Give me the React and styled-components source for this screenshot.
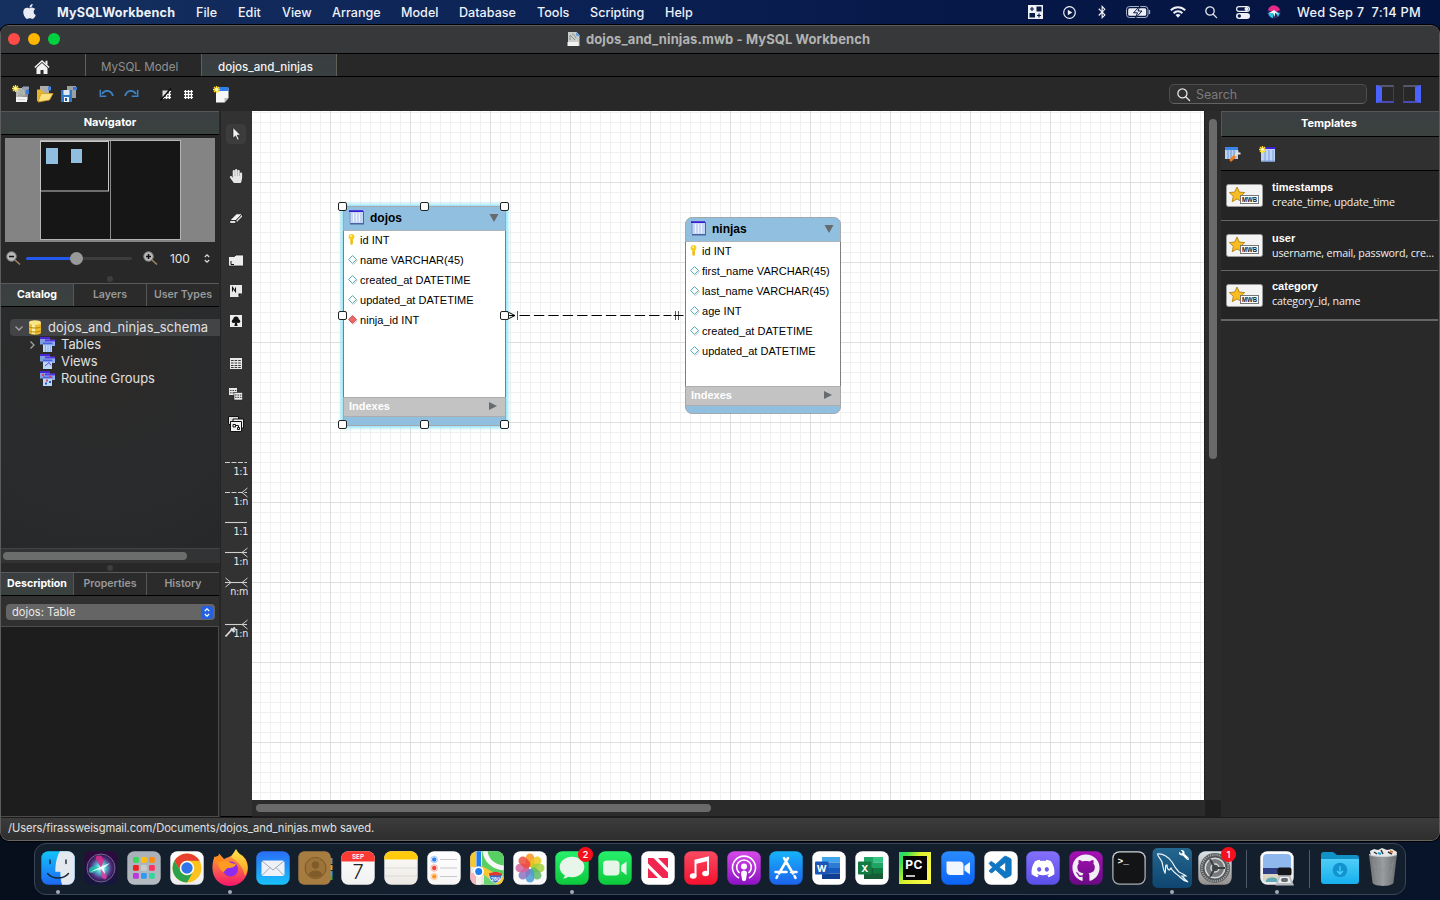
import React from "react";
import styled, { createGlobalStyle, css } from "styled-components";
import { FaApple, FaBluetoothB, FaDiscord, FaGithub, FaWrench, FaHandPaper } from "react-icons/fa";
import { VscVscode } from "react-icons/vsc";

const UI = `Inter, "Liberation Sans", sans-serif`;
const HELV = `"Liberation Sans", Arial, sans-serif`;

const Global = createGlobalStyle`
  * { box-sizing: border-box; }
  html, body { margin: 0; padding: 0; background: #040c1b; overflow: hidden; }
  svg { display: block; overflow: visible; flex: none; }
`;

const Desktop = styled.div`
  width: 1440px;
  height: 900px;
  overflow: hidden;
  display: flex;
  flex-direction: column;
  font-family: ${UI};
  color: #e4e4e4;
  background: linear-gradient(90deg, #15305f 0, #0d2457 33%, #061848 66%, #041440 100%) 0 0 / 100% 32px no-repeat,
    linear-gradient(90deg, #070e1c, #050d1f 50%, #08142a);
`;

/* ---------- menu bar ---------- */
const MenuBar = styled.header`
  height: 24px;
  flex: none;
  margin-bottom: 1px;
  display: flex;
  align-items: center;
  padding-left: 21px;
  font-size: 12.6px;
  font-weight: 500;
  color: #eef1f6;
`;
const MenuItem = styled.span`
  width: ${(p) => p.$w}px;
  margin-right: 21px;
  white-space: nowrap;
  font-weight: ${(p) => (p.$bold ? 700 : 500)};
  letter-spacing: ${(p) => p.$ls || 0}px;
`;
const AppleMark = styled.span`
  width: 36px;
  margin-top: -2px;
`;
const StatusItems = styled.div`
  margin-left: auto;
  display: flex;
  align-items: center;
`;
const StatusIcon = styled.span`
  width: ${(p) => p.$w}px;
  margin-right: ${(p) => p.$gap}px;
  padding-left: ${(p) => p.$pl || 0}px;
`;
const Clock = styled.span`
  width: 143px;
  white-space: pre;
  font-size: 12.8px;
  letter-spacing: 0.21px;
`;

/* ---------- window ---------- */
const Window = styled.main`
  height: 816px;
  flex: none;
  border: 1px solid #5c5c5d;
  border-bottom-color: #666;
  border-radius: 9px;
  box-shadow: 0 0 0 1px #000;
  overflow: hidden;
  display: flex;
  flex-direction: column;
  background: #292929;
`;
const TitleBar = styled.div`
  height: 28px;
  flex: none;
  display: flex;
  align-items: center;
  background: #373839;
  border-bottom: 1px solid #000;
  padding: 0 0 1px 7px;
`;
const Light = styled.i`
  width: 12px;
  height: 12px;
  border-radius: 50%;
  margin-right: 8px;
  background: ${(p) => p.$c};
`;
const WindowTitle = styled.div`
  display: flex;
  align-items: center;
  margin-left: 499px;
  gap: 6px;
  font-size: 13px;
  font-weight: 700;
  color: #b2b3b4;
  white-space: nowrap;
  letter-spacing: 0.1px;
  padding-bottom: 1px;
`;
const DocTabs = styled.div`
  height: 23px;
  flex: none;
  display: flex;
  background: #282828;
  border-bottom: 1px solid #000;
`;
const DocTab = styled.div`
  width: ${(p) => p.$w}px;
  border-right: 1px solid #625f58;
  display: flex;
  align-items: center;
  padding: 3px 0 0 ${(p) => p.$pl}px;
  font-size: 11.6px;
  letter-spacing: ${(p) => p.$ls || 0}px;
  white-space: nowrap;
  color: ${(p) => (p.$on ? "#f2f2f2" : "#8f9090")};
  font-weight: ${(p) => (p.$on ? 500 : 400)};
  background: ${(p) => (p.$on ? "linear-gradient(#3b3d40, #384140)" : "transparent")};
`;
const Toolbar = styled.div`
  height: 34px;
  flex: none;
  display: flex;
  align-items: center;
  padding-left: 11px;
  background: #282828;
`;
const ToolIcon = styled.span`
  width: 18px;
  margin-right: ${(p) => p.$gap}px;
`;
const Search = styled.div`
  margin-left: auto;
  width: 198px;
  height: 20px;
  border: 1px solid #4c4c4c;
  border-bottom-color: #626262;
  border-radius: 5px;
  background: #313131;
  display: flex;
  align-items: center;
  padding-left: 7px;
  gap: 6px;
  font-size: 12.4px;
  color: #7c7c7c;
`;
const PaneToggle = styled.i`
  width: 18px;
  height: 18px;
  margin-left: 9px;
  border: 1px solid #3a2fb8;
  border-top: 2px solid #55556e;
  border-bottom: 2px solid #4b4bb8;
  ${(p) => (p.$side === "left" ? css`border-left: 6px solid #4a63ff;` : css`border-right: 6px solid #4a63ff;`)}
  &:last-child { margin-right: 18px; }
`;
const Content = styled.div`
  height: 706px;
  flex: none;
  display: flex;
`;
const StatusBar = styled.footer`
  flex: 1;
  border-top: 1px solid #1b1b1b;
  background: linear-gradient(#3c3c3c, #2e2e2e);
  font-size: 11.2px;
  color: #e0e0e0;
  padding: 3px 0 0 7px;
  letter-spacing: -0.09px;
  line-height: 15px;
`;

/* ---------- left sidebar ---------- */
const Sidebar = styled.aside`
  width: 219px;
  flex: none;
  display: flex;
  flex-direction: column;
  background: #282828;
  padding-right: 1px;
`;
const PanelHeader = styled.div`
  height: ${(p) => p.$h}px;
  flex: none;
  border-top: 1px solid #575757;
  border-left: ${(p) => (p.$left ? "1px solid #575757" : 0)};
  border-bottom: 1px solid #000;
  background: linear-gradient(#3c3e41, #39423f);
  display: flex;
  align-items: center;
  justify-content: center;
  font-size: 11px;
  font-weight: 700;
  color: #fff;
  padding: 0 ${(p) => (p.$left ? 3 : 0)}px 2px 0;
`;
const Overview = styled.div`
  margin: 3px 4px 0;
  height: 104px;
  flex: none;
  background: #848484;
`;
const ZoomRow = styled.div`
  height: 32px;
  flex: none;
  display: flex;
  align-items: center;
  padding-left: 5px;
  font-size: 12px;
`;
const Slider = styled.div`
  width: 106px;
  height: 3px;
  margin: 0 11px 0 5px;
  border-radius: 2px;
  background: linear-gradient(90deg, #2459ee 50px, #3d3d3d 50px);
  display: flex;
  align-items: center;
  &::after {
    content: "";
    width: 13px;
    height: 13px;
    border-radius: 50%;
    background: #999;
    margin-left: 44px;
  }
`;
const ZoomValue = styled.span`
  width: 34px;
  margin-left: 12px;
  letter-spacing: -0.15px;
  padding-top: 1px;
`;
const Grip = styled.div`
  height: ${(p) => p.$h}px;
  flex: none;
  display: flex;
  align-items: center;
  justify-content: center;
  &::after {
    content: "";
    width: 6px;
    height: 6px;
    border-radius: 50%;
    background: #3e3e3e;
  }
`;
const Tabs = styled.div`
  height: 24px;
  flex: none;
  display: flex;
  border-top: 1px solid #5a5a5a;
  border-bottom: 1px solid #000;
  background: #2b2b2b;
`;
const Tab = styled.div`
  flex: 1 1 0;
  min-width: 0;
  display: flex;
  align-items: center;
  justify-content: center;
  font-size: 10.6px;
  font-weight: ${(p) => (p.$on ? 700 : 600)};
  white-space: nowrap;
  color: ${(p) => (p.$on ? "#fff" : "#98999a")};
  background: ${(p) => (p.$on ? "linear-gradient(#3c3e41, #39423f)" : "transparent")};
  border-left: ${(p) => (p.$on ? 0 : "1px solid #575757")};
  padding-bottom: 1px;
`;
const Tree = styled.div`
  flex: none;
  height: 241px;
  margin-right: -1px;
  padding-top: 12px;
  background: radial-gradient(circle at 100px 50px, #2c2a28, #292b2d 60%, #272829);
`;
const TreeRow = styled.div`
  height: 17px;
  display: flex;
  align-items: center;
  margin-left: 9px;
  padding-left: ${(p) => p.$pl}px;
  border-radius: 4px 0 0 4px;
  background: ${(p) => (p.$on ? "#434446" : "transparent")};
  font-size: 12.9px;
  letter-spacing: ${(p) => p.$ls || 0}px;
  white-space: nowrap;
  color: #e0e0e0;
`;
const TreeIcon = styled.span`
  width: ${(p) => p.$w}px;
  flex: none;
`;
const HScroll = styled.div`
  height: 15px;
  flex: none;
  margin-right: -1px;
  border-top: 1px solid #424445;
  background: #323334;
  padding: 3px 0 0 2px;
  &::after {
    content: "";
    display: block;
    width: 184px;
    height: 8px;
    border-radius: 4px;
    background: #6b6c6c;
  }
`;
const ObjectRow = styled.div`
  height: 31px;
  flex: none;
  background: #303030;
  border-bottom: 1px solid #4b4b4b;
  padding: 8px 4px 0 5px;
`;
const Popup = styled.div`
  height: 16px;
  border-radius: 4px;
  background: #656565;
  display: flex;
  align-items: center;
  justify-content: space-between;
  padding: 0 2px 0 6px;
  font-size: 11.1px;
  color: #eaeaea;
`;
const DescriptionArea = styled.div`
  flex: 1;
  background: #1d1d1d;
  border-right: 1px solid #4b4b4b;
  border-bottom: 1px solid #4b4b4b;
`;

/* ---------- tool palette ---------- */
const Palette = styled.nav`
  width: 32px;
  flex: none;
  border-left: 1px solid #242424;
  border-bottom: 1px solid #000;
  background: #323232;
  display: flex;
  flex-direction: column;
  padding-top: 13px;
`;
const Tool = styled.div`
  width: 20px;
  height: 20px;
  flex: none;
  margin: 0 0 ${(p) => p.$mb}px 5px;
  border-radius: 4px;
  background: ${(p) => (p.$on ? "#3c3c3c" : "transparent")};
  display: flex;
  align-items: center;
  justify-content: center;
`;
const Relation = styled.div`
  height: 20px;
  flex: none;
  margin: 0 4px ${(p) => p.$mb || 10}px 3px;
  display: flex;
  flex-direction: column;
  align-items: flex-end;
  font: 9.6px/9px "DejaVu Sans", sans-serif;
  color: #e6e6e6;
  letter-spacing: -0.3px;
`;

/* ---------- diagram canvas ---------- */
const Center = styled.section`
  width: 953px;
  flex: none;
  display: flex;
  flex-direction: column;
`;
const Canvas = styled.div`
  height: 689px;
  flex: none;
  position: relative;
  font-family: ${HELV};
  background-color: #fff;
  border-right: 1px solid #1f1f1f;
  background-image: linear-gradient(90deg, #dedede 1px, transparent 1px),
    linear-gradient(#dedede 1px, transparent 1px),
    linear-gradient(90deg, #f0f0f0 1px, transparent 1px),
    linear-gradient(#f0f0f0 1px, transparent 1px);
  background-size: 80px 80px, 80px 80px, 10px 10px, 10px 10px;
  background-position: 78px 0, 0 71px, 8px 0, 0 1px;
`;
const CanvasScroll = styled.div`
  flex: 1;
  background: #2b2b2b;
  border-bottom: 1px solid #1c1c1c;
  padding: 4px 0 0 4px;
  &::after {
    content: "";
    display: block;
    width: 455px;
    height: 8px;
    border-radius: 4px;
    background: #6a6a6a;
  }
`;
const VScroll = styled.div`
  width: 16px;
  flex: none;
  background: linear-gradient(#2b2b2b 689px, #1f1f1f 689px);
  padding: 8px 0 0 4px;
  &::after {
    content: "";
    display: block;
    width: 8px;
    height: 340px;
    border-radius: 4px;
    background: #6a6a6a;
  }
`;
const Entity = styled.div`
  position: absolute;
  left: ${(p) => p.$x}px;
  top: ${(p) => p.$y}px;
  width: ${(p) => p.$w}px;
  height: ${(p) => p.$h}px;
  display: flex;
  flex-direction: column;
  border: 1px solid #a2a8ac;
  border-radius: ${(p) => (p.$selected ? 0 : 7)}px;
  background: #91bfdf;
  box-shadow: ${(p) => (p.$selected ? "0 0 3px 2px #92e4f8" : "none")};
  color: #000;
`;
const EntityHead = styled.div`
  height: 24px;
  flex: none;
  display: flex;
  align-items: center;
  padding: 0 6px 2px 5px;
  gap: 5px;
  font-size: 12px;
  font-weight: 700;
  border-bottom: 1px solid #b0b4b6;
  & > svg:last-child { margin-left: auto; }
`;
const EntityBody = styled.div`
  flex: 1;
  background: #fff;
  box-shadow: -1px 0 #7d7d7d, 1px 0 #7d7d7d;
`;
const Field = styled.div`
  height: 20px;
  display: flex;
  align-items: center;
  padding: 0 0 3px 4px;
  font-size: 11px;
  white-space: nowrap;
  letter-spacing: 0.04px;
`;
const FieldMark = styled.span`
  width: 12px;
  flex: none;
`;
const Indexes = styled.div`
  height: 20px;
  flex: none;
  border-top: 1px solid #adadad;
  border-bottom: 1px solid #adadad;
  background: #c3c3c3;
  display: flex;
  align-items: center;
  justify-content: space-between;
  padding: 0 7px 2px 5px;
  font-size: 11px;
  font-weight: 700;
  color: #fff;
`;
const EntityFoot = styled.div`
  height: ${(p) => p.$h}px;
  flex: none;
`;
const Handle = styled.i`
  position: absolute;
  left: ${(p) => p.$x}px;
  top: ${(p) => p.$y}px;
  width: 9px;
  height: 9px;
  border: 1px solid #222;
  border-radius: 2px;
  background: #fff;
`;
const Link = styled.svg`
  position: absolute;
  left: 254px;
  top: 198px;
`;

/* ---------- templates ---------- */
const Templates = styled.aside`
  flex: 1;
  min-width: 0;
  display: flex;
  flex-direction: column;
  background: #292929;
`;
const TemplateTools = styled.div`
  height: 34px;
  flex: none;
  background: #303030;
  border-bottom: 1px solid #000;
  display: flex;
  align-items: center;
  padding-left: 4px;
  gap: 17px;
`;
const Template = styled.div`
  height: 50px;
  flex: none;
  margin-right: 1px;
  border-bottom: ${(p) => (p.$last ? 2 : 1)}px solid #666;
  background: #252525;
  display: flex;
  align-items: center;
  padding-left: 5px;
  gap: 9px;
`;
const TemplateText = styled.div`
  display: flex;
  flex-direction: column;
  font: 10.7px/14px "Open Sans", "Noto Sans", sans-serif;
  color: #f0f0f0;
  white-space: nowrap;
  padding: ${(p) => p.$pt || 0}px 0 3px;
  letter-spacing: -0.14px;
`;
const TemplateName = styled.b`
  font-family: ${HELV};
  font-size: 11px;
  line-height: 15px;
  color: #fff;
  letter-spacing: 0;
`;

/* ---------- dock ---------- */
const Dock = styled.footer`
  width: 1372px;
  height: 52px;
  flex: none;
  margin: 2px 0 0 34px;
  border: 1px solid #3a4656;
  border-radius: 12px;
  background: #131f2d;
  display: flex;
  padding: 7px 0 0 2px;
`;
const DockSlot = styled.div`
  width: ${(p) => p.$w || 42.84}px;
  flex: none;
  display: flex;
  flex-direction: column;
  align-items: center;
  gap: 4.5px;
  font-family: ${UI};
`;
const RunDot = styled.i`
  width: 4px;
  height: 4px;
  border-radius: 50%;
  background: #a3acb6;
`;
const DockRule = styled.i`
  width: 1px;
  flex: none;
  height: 38px;
  margin: -1px ${(p) => p.$r}px 0 ${(p) => p.$l}px;
  background: #4f5a68;
`;

/* ---------- small drawings ---------- */
const DocIcon = ({ w = 13, h = 14 }) => (
  <svg width={w} height={h} viewBox="0 0 13 14">
    <path d="M1 0h8.5L12.500 3V14H1z" fill="#c9cdc9" />
    <path d="M0.500 10h11v4h-11z" fill="#f2f2f2" />
    <path d="M3 8V3l5 5M5 2c2 0 3 2 4 4" stroke="#8b928c" fill="none" />
    <path d="M9 0.500 12.500 3.500 9.500 4z" fill="#3f8ff0" />
  </svg>
);
const Spark = () => (
  <g>
    <path d="M3.500 0v7M0 3.500h7M1 1l5 5M6 1 1 6" stroke="#ffdf3a" strokeWidth="1.300" />
    <circle cx="3.500" cy="3.500" r="1.300" fill="#fffbd0" />
  </g>
);
const NewDoc = () => (
  <svg width="18" height="18" viewBox="0 0 18 18">
    <path d="M4 3h7v12H4z" fill="#b9bdb9" />
    <path d="M10 2h6v13h-6z" fill="#8d9298" />
    <path d="M11 1.500h6v3h-6z" fill="#8ea2bd" />
    <path d="M14 5h3v4h-3z" fill="#3b79d6" />
    <path d="M6 4h7v7.500H6z" fill="#a1a7a1" />
    <path d="M7 10V5l4 4.500M9 4.500c2 0 3 2 3 5" stroke="#c5cac5" fill="none" strokeWidth=".8" />
    <path d="M4 12h11v5H4z" fill="#f3f3f3" />
    <path d="M6 14.500h7" stroke="#d4d4d4" />
    <Spark />
  </svg>
);
const OpenDoc = () => (
  <svg width="18" height="18" viewBox="0 0 18 18">
    <path d="M4 1h9v9H4z" fill="#a9adb0" />
    <path d="M12 1.500h3v4h-3z" fill="#4c86d8" />
    <path d="M1 4.500h4.500l1 2H8V16H1z" fill="#e5b52c" />
    <path d="M5 8.500h12L13.500 15 2 17z" fill="#fae27e" stroke="#d29a1d" strokeWidth=".8" />
  </svg>
);
const SaveDoc = () => (
  <svg width="18" height="18" viewBox="0 0 18 18">
    <path d="M7 1h9v12H7z" fill="#9aa0a4" />
    <path d="M13 2h4v3h-4z" fill="#3b79d6" />
    <path d="M1 5h11v12H1z" fill="#2f77c8" />
    <path d="M3.500 5h6v5h-6z" fill="#dfe9f4" />
    <path d="M4 12h5v5H4z" fill="#f4f7fa" />
    <path d="M5 13h2v3H5z" fill="#235a9c" />
  </svg>
);
const Undo = ({ flip }) => (
  <svg width="16" height="10" viewBox="0 0 16 10">
    <g transform={flip ? "translate(16 0) scale(-1 1)" : ""}>
      <path d="M3 5C5.500 .5 12 .5 14 7" fill="none" stroke="#3b82c4" strokeWidth="1.900" />
      <path d="M1.300 .8v6.400h6" fill="none" stroke="#3b82c4" strokeWidth="1.500" />
    </g>
  </svg>
);
const Hash = ({ slash }) => (
  <svg width="12" height="12" viewBox="0 0 12 12">
    <rect x="2.500" y="2.500" width="8" height="8" fill={slash ? "#777" : "#4b4b4b"} />
    <path d="M3.500 2v9M6.500 2v9M9.500 2v9M2 3.500h9M2 6.500h9M2 9.500h9" stroke="#fff" strokeWidth="1.200" />
    {slash && <path d="M0 13 12-1 2-1 0 2z" fill="#282828" />}
    {slash && <path d="M.5 12.500 11 .5" stroke="#080808" strokeWidth="1.200" />}
    {slash && <path d="M2.500 9V2.500H8z" fill="#ddd" />}
  </svg>
);
const NewNote = () => (
  <svg width="17" height="17" viewBox="0 0 17 17">
    <path d="M3 2h12.500v10l-4 4.500H3z" fill="#f6f6f8" />
    <path d="M3 1h12.500v4H3z" fill="#2f7fee" />
    <path d="M15.500 12h-4v4.500z" fill="#bbb" />
    <Spark />
  </svg>
);
const Magnifier = ({ size = 12, w = 1.300 }) => (
  <svg width={size} height={size} viewBox="0 0 12 12" fill="none" stroke="#e4e6ea" strokeWidth={w}>
    <circle cx="5" cy="5" r="4.200" />
    <path d="m8 8 3.600 3.600" strokeLinecap="round" />
  </svg>
);
const Lens = ({ plus }) => (
  <svg width="15" height="14" viewBox="0 0 15 14">
    <path d="m9 9 5 4.500" stroke="#a08663" strokeWidth="1.600" />
    <circle cx="5.500" cy="5.500" r="4.800" fill="#b9b9b9" stroke="#777" />
    <path d={plus ? "M3 5.500h5M5.500 3v5" : "M3 5.500h5"} stroke="#111" strokeWidth="1.500" />
  </svg>
);
const Steps = ({ c = "#ddd" }) => (
  <svg width="6" height="9" viewBox="0 0 6 9" fill="none" stroke={c} strokeWidth="1.200">
    <path d="M.8 3 3 .8 5.200 3M.8 6 3 8.200 5.200 6" />
  </svg>
);
const PopupButton = styled.span`
  width: 12px;
  height: 13px;
  border-radius: 3px;
  background: #2360e2;
  display: flex;
  align-items: center;
  justify-content: center;
`;
const Chevron = ({ open }) => (
  <svg width="8" height="8" viewBox="0 0 8 8" fill="none" stroke="#a4a5a6" strokeWidth="1.300">
    <path d={open ? "M.5 2.500 4 6 7.500 2.500" : "M2.500 .5 6 4 2.500 7.500"} />
  </svg>
);
const Database = () => (
  <svg width="12" height="15" viewBox="0 0 12 15">
    <path d="M0 2.500v10C0 15.500 12 15.500 12 12.500v-10z" fill="#eebf2c" />
    <path d="M3 3v11h3V3z" fill="#fff0a0" />
    <ellipse cx="6" cy="2.500" rx="6" ry="2.300" fill="#fbe685" />
    <path d="M0 6.500c1 2 11 2 12 0M0 10.500c1 2 11 2 12 0" stroke="#b8860b" fill="none" />
  </svg>
);
const Stack = ({ kind }) => (
  <svg width="16" height="15" viewBox="0 0 16 15">
    <path d="M0 .5h10v7H0z" fill="#7f9fe0" />
    <path d="M0 0h10v2H0z" fill="#4a25d8" />
    <path d="M5 3h10v6H5z" fill="#8fb1ea" />
    <path d="M5 2.500h10v2H5z" fill="#5a35e0" />
    <path d="M3 7h9v8H3z" fill="#bcd6f8" />
    <path d="M3 5.500h9.500v2H3z" fill="#4a63e0" />
    {kind === "tables" && <path d="M5.500 8v7M8 8v7M10.500 8v7" stroke="#8fb0ea" />}
    {kind === "views" && <path d="M5 12 9 8.500l2 3" stroke="#5848e0" fill="none" />}
    {kind === "routines" && <path d="M2 4h2M9 6h2M6 9.500h2" stroke="#d8405c" strokeWidth="1.800" />}
    {kind === "routines" && <path d="M5 12.500h2M9 11h2" stroke="#3358c8" strokeWidth="2" />}
  </svg>
);
const TableGlyph = () => (
  <svg width="16" height="15" viewBox="0 0 16 15">
    <path d="M1 1h14v13.500H1z" fill="#4a64a0" />
    <path d="M1 1h13v12H1z" fill="#c5d6f5" />
    <path d="M0 .3h14v1.800H0z" fill="#3a1dd0" />
    <path d="M4.500 3v9M7.500 3v9M10.500 3v9" stroke="#eef4ff" strokeWidth="1" />
    <path d="M1 2v11" stroke="#7890c8" />
  </svg>
);
const Key = () => (
  <svg width="7" height="11" viewBox="0 0 7 11">
    <path d="M2.300 4h2.600v6L3.500 11 2.300 10z" fill="#f0bd10" />
    <circle cx="3.500" cy="2.800" r="2.900" fill="#f8ce18" />
    <circle cx="3" cy="2" r="1" fill="#fff3a0" />
  </svg>
);
const Diamond = ({ red }) => (
  <svg width="10" height="10" viewBox="0 0 10 10">
    <path d="M4.500 1.500 9.200 5.500 5 9.800" fill="none" stroke="#c4c4c4" />
    <path
      d="M4.500.6 8.400 4.500 4.500 8.400.6 4.500z"
      fill={red ? "#ec6a6a" : "#fff"}
      stroke={red ? "#c44" : "#35a0a6"}
      strokeWidth=".9"
    />
  </svg>
);
const TemplateBadge = () => (
  <svg width="37" height="23" viewBox="0 0 37 23">
    <rect x=".5" y=".5" width="36" height="22" rx="2" fill="#f4f4f4" stroke="#9b9b9b" />
    <path d="m11 3 2.300 5 5.400.6-4 3.700 1.100 5.400L11 15l-4.800 2.700 1.100-5.400-4-3.700 5.400-.6z" fill="#f7bd22" stroke="#a97808" strokeWidth=".8" />
    <rect x="14.500" y="11.500" width="18" height="8" fill="#fff" stroke="#777" />
    <text x="16" y="18.300" fontFamily="Liberation Sans" fontWeight="700" fontSize="7.300" textLength="15" lengthAdjust="spacingAndGlyphs" fill="#222">MWB</text>
  </svg>
);

const PaletteIcons = {
  pointer: (
    <svg width="9" height="14" viewBox="0 0 9 14">
      <path d="M1 .5v10.800l2.500-2.400 2 4.300 1.700-.8-2-4.200H8.600z" fill="#f4f4f4" stroke="#111" strokeWidth=".6" />
    </svg>
  ),
  hand: <FaHandPaper size={14} color="#e6e6e6" />,
  eraser: (
    <svg width="14" height="11" viewBox="0 0 14 11">
      <path d="M.8 7.500 7.500.8h6L7 7.500z" fill="#f3f3f3" stroke="#161616" strokeWidth=".8" />
      <path d="M.8 7.500H7v3H.8zM7 7.500 13.500.8v3L7 10.500z" fill="#ddd" stroke="#161616" strokeWidth=".8" />
    </svg>
  ),
  layer: (
    <svg width="16" height="13" viewBox="0 0 16 13">
      <path d="M.5 2.500h6l1.500-1.500H15.500v11H.5z" fill="#ececec" stroke="#1c1c1c" strokeWidth=".8" />
      <path d="M3 7v3.500H6" stroke="#111" fill="none" />
    </svg>
  ),
  note: (
    <svg width="12" height="12" viewBox="0 0 12 12">
      <path d="M0 0h12v8.500L8.500 12H0z" fill="#e9e9e9" />
      <path d="M12 8.500H8.500V12z" fill="#111" />
      <path d="M2.500 6.500v-4l3 4v-4" stroke="#111" strokeWidth="1.100" fill="none" />
    </svg>
  ),
  image: (
    <svg width="12" height="12" viewBox="0 0 12 12">
      <path d="M0 0h12v12H0z" fill="#ededed" />
      <circle cx="6" cy="4.300" r="2.700" fill="#111" />
      <circle cx="3.700" cy="6.200" r="1.900" fill="#111" />
      <circle cx="8.300" cy="6.200" r="1.900" fill="#111" />
      <path d="M5.200 7h1.600l.8 4H4.400z" fill="#111" />
    </svg>
  ),
  table: (
    <svg width="12" height="11" viewBox="0 0 12 11">
      <path d="M0 0h12v11H0z" fill="#e8e8e8" />
      <path d="M1 2.500h10M1 5h10M1 7.500h10M1 9.500h10" stroke="#222" strokeDasharray="2.600 1" strokeWidth=".9" />
    </svg>
  ),
  view: (
    <svg width="14" height="12" viewBox="0 0 14 12">
      <path d="M0 0h8v7H0z" fill="#e8e8e8" />
      <path d="M1 2.500h7M1 4.800h7" stroke="#222" strokeWidth=".8" strokeDasharray="1.600 .8" />
      <path d="M5 4.500h8.500V12H5z" fill="#eee" stroke="#222" strokeWidth=".6" />
      <path d="M6 7h7M6 9.300h7" stroke="#222" strokeWidth=".9" strokeDasharray="1.600 .8" />
    </svg>
  ),
  routines: (
    <svg width="16" height="16" viewBox="0 0 16 16">
      <path d="M.5.500h10v8H.5z" fill="#ddd" stroke="#111" />
      <path d="M5 3h10.500v9H5z" fill="#eee" stroke="#111" />
      <path d="M2.500 5.500h11V15.500h-11z" fill="#f2f2f2" stroke="#111" />
      <path d="M5 8.500h2.500V11H5zM9.500 11.500h2v2h-2zM7.500 9.500h3v2" stroke="#111" fill="none" />
    </svg>
  ),
};

const RelLine = ({ dashed, many, both, pick }) => (
  <svg width="23" height="10" viewBox="0 0 23 10" fill="none" stroke="#cfcfcf">
    <path d="M0 5.500h22" strokeDasharray={dashed ? "5 1.500" : "none"} strokeWidth="1.100" />
    {many && <path d="M22.500 1 17 5.500l5.500 4.500" />}
    {both && <path d="M.5 1 6 5.500.5 10" />}
    {pick && <path d="M.5 17.500 6.500 11" stroke="#ddd" strokeWidth="1.800" />}
    {pick && <path d="M6 9.500 9.500 13M7 11.500 10 8.500" stroke="#ddd" strokeWidth="2.200" />}
  </svg>
);

const Tri = ({ right }) => (
  <svg width="10" height="8" viewBox="0 0 10 8">
    <path d={right ? "M1 0v8l8-4z" : "M.5 0h9L5 8z"} fill="#666b6f" />
  </svg>
);

/* ---------- dock artwork, 34 x 34 each ---------- */
const grad = (id, a, b) => (
  <linearGradient id={id} x1="0" y1="0" x2="0" y2="1">
    <stop offset="0" stopColor={a} />
    <stop offset="1" stopColor={b} />
  </linearGradient>
);
const Art = ({ id, a, b, children }) => (
  <svg width="34" height="34" viewBox="0 0 34 34">
    {a && <defs>{grad(id, a, b)}</defs>}
    {a && <rect x=".3" y=".3" width="33.400" height="33.400" rx="7" fill={`url(#${id})`} />}
    {children}
  </svg>
);
const NoticeDot = ({ n }) => (
  <g>
    <circle cx="30.500" cy="3.500" r="7.600" fill="#f5111c" />
    <text x="30.500" y="6.700" textAnchor="middle" fontSize="9.500" fontWeight="500" fill="#fff">{n}</text>
  </g>
);

const petals = ["#f7941d", "#e9c81b", "#a4cf3a", "#5dbb63", "#4a9bd6", "#8a75c0", "#d3649f", "#ec4b3d"];
const launchColors = ["#37d95b", "#ffbe0a", "#ff8a0d", "#ee2020", "#c8ccce", "#ff3163", "#c035e0", "#2b9bf5", "#2fd6a0"];

const dockApps = [
  { run: true, art: (
    <Art id="fi" a="#12c3fb" b="#1d68f3">
      <path d="M19 .3h7.700a7 7 0 0 1 7 7v19.400a7 7 0 0 1-7 7H21c-1-3.500-1.700-8-1.700-13h-5C14.400 12 16 5 19 .3z" fill="#e4e9f0" />
      <path d="M9 9v3.500M25 9v3.500M6.500 22.500c5 6 16 6 21 0" stroke="#16263a" strokeWidth="1.400" fill="none" strokeLinecap="round" />
    </Art>) },
  { art: (
    <Art id="si" a="#30083d" b="#15173e">
      <defs>
        <radialGradient id="orb"><stop offset="0" stopColor="#fff" /><stop offset=".35" stopColor="#4ec7d6" /><stop offset=".75" stopColor="#542b7c" /><stop offset="1" stopColor="#221a4a" /></radialGradient>
      </defs>
      <circle cx="17" cy="17" r="14" fill="url(#orb)" stroke="#8a7aa5" strokeWidth=".8" />
      <path d="M17 17C12 8 10 6 13 5c5-2 9 3 4 12z" fill="#e02a8c" opacity=".85" />
      <path d="M17 17C8 13 4 17 5 21c2 3 8-1 12-4z" fill="#14c9a8" opacity=".75" />
      <path d="M17 17c5 3 7 9 5 11-4 2-6-5-5-11z" fill="#e33fa0" opacity=".8" />
      <path d="m6 21 10-5 10-4-6 5 1 6-4-5z" fill="#e6fcff" />
    </Art>) },
  { art: (
    <Art id="la" a="#a9b0b8" b="#b5bbc0">
      {launchColors.map((c, i) => <rect key={c} x={6 + (i % 3) * 8} y={6 + Math.floor(i / 3) * 8} width="5.800" height="5.800" rx="1.300" fill={c} />)}
    </Art>) },
  { art: (
    <Art id="ch" a="#ffffff" b="#ececec">
      <circle cx="17" cy="17" r="14.500" fill="#fcc31e" />
      <path d="M4.450 9.750A14.500 14.500 0 0 1 29.550 9.750H17A7.250 7.250 0 0 0 10.700 20.600z" fill="#e8402f" />
      <path d="M4.450 9.750 10.720 20.620A7.250 7.250 0 0 0 23.300 20.600L17 31.500A14.500 14.500 0 0 1 4.450 9.750z" fill="#2ba24c" />
      <circle cx="17" cy="17" r="7.200" fill="#fff" />
      <circle cx="17" cy="17" r="5.700" fill="#2f74e8" />
    </Art>) },
  { run: true, art: (
    <Art>
      <defs>{grad("fx", "#ffb02a", "#f5156c")}{grad("fx2", "#ffe84a", "#ff9a1e")}</defs>
      <path d="M1.500 5.500 5 7.500l1-5 5 5.500 7-3 5-5c2 3 4 4 6 6l3 1c3 5 4 10 2 16C31 31 24 35 17 35-1 34-3 17 1.500 5.500z" fill="url(#fx)" />
      <path d="M18 6 23-2c2 4 5 6 7 7l3 5c2 5 2 10-1 15-2-8-6-14-14-19z" fill="url(#fx2)" />
      <path d="M2 6 7 4l4 5.500C7 12 8 17 8 17c-4-4-6-8-6-11z" fill="#ff8a1c" />
      <circle cx="17.500" cy="18" r="7.600" fill="#8d2cf0" />
      <path d="M5 12c5-3 9-3 13 0l5 1c-1 3-4 4-8 4-3 1-3 4-5 4-3-2-5-5-5-9z" fill="#ff9a22" />
    </Art>) },
  { art: (
    <Art id="ma" a="#2a6df5" b="#18c2fb">
      <rect x="5.500" y="9.500" width="23" height="15.500" rx="2" fill="#eef2f6" />
      <path d="m6 10 11 9 11-9M6 24.500l8-8M28 24.500l-8-8" stroke="#9aa8b8" fill="none" />
    </Art>) },
  { art: (
    <Art>
      <path d="M31 7h3.500v6H31z" fill="#888" /><path d="M31 14h3.500v5H31z" fill="#f0a020" /><path d="M31 20h3.500v5H31z" fill="#22b0e8" /><path d="M31 25h3.500v4H31z" fill="#30b050" />
      <rect x=".3" y=".3" width="32.500" height="33.400" rx="6" fill="#a77c41" />
      <circle cx="17.500" cy="17" r="10.500" fill="#9c733a" stroke="#7b5726" />
      <circle cx="17.500" cy="14" r="3.700" fill="#805c2b" />
      <path d="M10.500 23.500c2-5.500 12-5.500 14 0-3 4-11 4-14 0z" fill="#805c2b" />
    </Art>) },
  { art: (
    <Art id="ca" a="#fdfdfd" b="#f1f1f1">
      <path d="M.3 10.500V7.300a7 7 0 0 1 7-7h19.400a7 7 0 0 1 7 7v3.200z" fill="#fb3b33" />
      <text x="17" y="8.300" textAnchor="middle" fontSize="6.400" fontWeight="600" fill="#fff">SEP</text>
      <text x="17" y="28" textAnchor="middle" fontSize="20" fontWeight="300" fill="#222">7</text>
    </Art>) },
  { art: (
    <Art id="no" a="#fdfdfb" b="#ebe8e4">
      <path d="M.3 8.500V7.300a7 7 0 0 1 7-7h19.400a7 7 0 0 1 7 7v1.200z" fill="#ffcb0c" />
      <path d="M1 17h32M1 25h32" stroke="#d9d5cf" strokeWidth=".8" />
    </Art>) },
  { art: (
    <Art id="re" a="#ffffff" b="#f6f6f6">
      {["#2f80f2", "#f04436", "#ff9420"].map((c, i) => (
        <g key={c}>
          <circle cx="7.200" cy={8.500 + i * 8.500} r="2.200" fill={c} />
          <circle cx="7.200" cy={8.500 + i * 8.500} r="3.300" fill="none" stroke={c} strokeWidth=".4" />
          <path d={`M13 ${8.500 + i * 8.500}h17`} stroke="#c9c9c9" />
        </g>
      ))}
    </Art>) },
  { art: (
    <Art id="mp" a="#f3f0ea" b="#e9e5dd">
      <clipPath id="mpc"><rect x=".3" y=".3" width="33.400" height="33.400" rx="7" /></clipPath>
      <g clipPath="url(#mpc)">
        <path d="M12 0h22v26L12 18z" fill="#57cf63" />
        <path d="M15 0c1 9 8 16 19 17" stroke="#f6f6f4" strokeWidth="5" fill="none" />
        <path d="M0 0h6v16H0z" fill="#f9c72f" /><path d="M0 22h6v12H0z" fill="#f4b6bd" />
        <path d="M10 14 34 27v7H28L10 22z" fill="#f9c72f" />
        <path d="M14 24 28 34H14z" fill="#6ad474" />
        <path d="M6 0h5v34H6z" fill="#f3f0ec" /><path d="M6.500 0h4.500v18H6.500z" fill="#1f7df2" />
      </g>
      <circle cx="8.700" cy="20.500" r="5.200" fill="#fff" /><circle cx="8.700" cy="20.500" r="3.500" fill="#1f7df2" />
      <path d="M19 23c4-2 9-2 13 0 0 5-3 8-6.500 9-4-1-6.500-4-6.500-9z" fill="#2f6fd0" stroke="#fff" strokeWidth=".7" />
      <path d="M19 22.500c4-2 9-2 13 0v2H19z" fill="#e0392f" />
      <text x="25.500" y="29.500" textAnchor="middle" fontSize="4.800" fontWeight="700" fill="#fff">280</text>
    </Art>) },
  { art: (
    <Art id="ph" a="#ffffff" b="#f8f8f8">
      {petals.map((c, i) => <rect key={c} x="12.700" y="2.500" width="8.600" height="13.500" rx="4.300" fill={c} opacity=".85" transform={`rotate(${i * 45} 17 17)`} />)}
    </Art>) },
  { run: true, art: (
    <Art id="me" a="#27f06c" b="#0dc83c">
      <ellipse cx="17" cy="16" rx="12.300" ry="10.300" fill="#e8f6ea" />
      <path d="M10 23c0 2-1 3.500-2 4.500 3 0 5-1 6-3z" fill="#e0f2e3" />
      <NoticeDot n="2" />
    </Art>) },
  { art: (
    <Art id="fa" a="#27f06c" b="#0dc83c">
      <rect x="5" y="9.500" width="16.500" height="15" rx="4" fill="#e5f6e8" />
      <path d="m23 14.500 5.500-4v13.500L23 20z" fill="#e5f6e8" />
    </Art>) },
  { art: (
    <Art id="ne" a="#ffffff" b="#ffffff">
      <path d="M7 7h5.500l14.500 14.500V27h-5.500L7 12.500zM17 7h10v10zM7 17l10 10H7z" fill="#f12550" />
    </Art>) },
  { art: (
    <Art id="mu" a="#fb4a62" b="#f4112e">
      <path d="M11.500 24.500V9.500L24 6.500v15.500" stroke="#fff" strokeWidth="2" fill="none" />
      <path d="M11.500 9 24 6v4l-12.500 3z" fill="#fff" />
      <ellipse cx="9.200" cy="25" rx="3.400" ry="2.700" fill="#fff" /><ellipse cx="21.600" cy="22.500" rx="3.400" ry="2.700" fill="#fff" />
    </Art>) },
  { art: (
    <Art id="po" a="#d64ae8" b="#8d13c4">
      <g fill="none" stroke="#fff" strokeWidth="1.600">
        <path d="M12 27a11.500 11.500 0 1 1 10 0" /><path d="M12.500 22a7.300 7.300 0 1 1 9 0" />
      </g>
      <circle cx="17" cy="15.500" r="3" fill="#fff" />
      <path d="M14 22c0-3.500 6-3.500 6 0l-1 6.500c-.5 2-3.500 2-4 0z" fill="#fff" />
    </Art>) },
  { art: (
    <Art id="as" a="#16b4fb" b="#1c62ec">
      <path d="M19 7 10 22.500M15 7l9 15.500M6.500 21h11M22 21h5.500M8.500 25l-1 2M25.500 25l1 2" stroke="#fff" strokeWidth="2.500" strokeLinecap="round" />
    </Art>) },
  { art: (
    <Art id="wo" a="#ffffff" b="#ffffff">
      <rect x="10" y="6" width="18" height="5.500" fill="#41a5ee" /><rect x="10" y="11.500" width="18" height="5.500" fill="#2b7cd3" /><rect x="10" y="17" width="18" height="5.500" fill="#185abd" /><rect x="10" y="22.500" width="18" height="5.500" fill="#103f91" />
      <rect x="3" y="10.500" width="13.500" height="13" rx="1" fill="#1b55b8" />
      <text x="9.700" y="20.600" textAnchor="middle" fontSize="9.500" fontWeight="700" fill="#fff">W</text>
    </Art>) },
  { art: (
    <Art id="ex" a="#ffffff" b="#ffffff">
      <rect x="9" y="6" width="9.500" height="11" fill="#21a366" /><rect x="18" y="6" width="10" height="5.500" fill="#33c481" /><rect x="18" y="11.500" width="10" height="5.500" fill="#21a366" /><rect x="9" y="17" width="19" height="11" fill="#185c37" /><rect x="18" y="17" width="10" height="5.500" fill="#107c41" />
      <rect x="3" y="10.500" width="13.500" height="13" rx="1" fill="#107c41" />
      <text x="9.700" y="20.600" textAnchor="middle" fontSize="9.500" fontWeight="700" fill="#fff">X</text>
    </Art>) },
  { art: (
    <Art>
      <defs><linearGradient id="pc" x2="1" y2=".6"><stop offset="0" stopColor="#21d789" /><stop offset=".2" stopColor="#3de04a" /><stop offset=".5" stopColor="#d8f02c" /><stop offset="1" stopColor="#fcf84a" /></linearGradient></defs>
      <rect x="1" y="1" width="32" height="32" fill="url(#pc)" />
      <rect x="5" y="5" width="24" height="24" fill="#050505" />
      <text x="7.300" y="17.500" fontSize="12" fontWeight="700" textLength="17" fill="#fff">PC</text>
      <path d="M8 25h9" stroke="#fff" strokeWidth="1.500" />
    </Art>) },
  { art: (
    <Art id="zo" a="#2a8cff" b="#0b63f6">
      <path d="M5.500 10.500h13a4 4 0 0 1 4 4V24h-13a4 4 0 0 1-4-4z" fill="#f1f6ff" />
      <path d="m23.500 15 5.500-4v12.500l-5.500-4z" fill="#f1f6ff" />
    </Art>) },
  { art: (
    <Art id="vs" a="#ffffff" b="#ffffff"><VscVscode x="3.500" y="3.500" size={27} color="#0f76c4" stroke="#0f76c4" strokeWidth=".5" /></Art>) },
  { art: (
    <Art id="di" a="#8470fb" b="#5a4fe8"><FaDiscord x="4.500" y="5" size={25} color="#fff" /></Art>) },
  { art: (
    <Art id="gi" a="#a511b4" b="#6b0b84"><FaGithub x="3" y="3" size={28} color="#f3eef5" /></Art>) },
  { art: (
    <Art id="te" a="#cfd6d8" b="#a5acae">
      <rect x="1.500" y="1.500" width="31" height="31" rx="6" fill="#131415" />
      <text x="5.500" y="13" fontFamily="Liberation Mono" fontWeight="700" fontSize="9.500" fill="#fff">&gt;_</text>
    </Art>) },
  { run: true, art: (
    <svg width="34" height="34" viewBox="0 0 34 34">
      <defs>{grad("wb", "#24678f", "#0e4670")}</defs>
      <rect x="-2.500" y="-3" width="39.500" height="40" rx="5" fill="url(#wb)" />
      <path d="M2.500 3c5-1 11 3 14.500 8 2 4 4 7 7 10 2 1 6 3 7 4l-4 0c2 2 3 4 6 6-5-1-7-4-9-6-3-2-6-4-8-8-1 1-1 2-2 2-2-1-2-3-2-5l-1 0c-1 2 0 5-1 8-2-3-2-7-3-11-1-3-4-5-4.500-8z" fill="none" stroke="#eef5f9" strokeWidth="1.200" />
      <g transform="translate(34 -1) scale(-1 1)"><FaWrench size={10} color="#fff" /></g>
    </svg>) },
  { art: (
    <Art id="se" a="#dae4e8" b="#94908c">
      <circle cx="17" cy="17" r="15" fill="#55585a" />
      <circle cx="17" cy="17" r="13.300" fill="none" stroke="#9fa3a5" strokeWidth="2" strokeDasharray="1.200 1" />
      <circle cx="17" cy="17" r="9.800" fill="#77797a" stroke="#d5d8d9" strokeWidth="1.500" />
      <circle cx="17" cy="17" r="4" fill="#4c4e50" stroke="#d5d8d9" strokeWidth="1.500" />
      <path d="M17 17h10M17 17l-5-8.700M17 17l-5 8.700" stroke="#3c3e40" strokeWidth="2" />
      <NoticeDot n="1" />
    </Art>) },
];

const PreviewArt = () => (
  <Art id="pv" a="#ffffff" b="#e8e8ea">
    <rect x="3" y="3" width="28" height="28" rx="4" fill="#8fb9ee" />
    <path d="M3 17h28v6H3z" fill="#2f3f86" /><path d="M3 23h28v4a4 4 0 0 1-4 4H7a4 4 0 0 1-4-4z" fill="#ddd5c4" />
    <path d="M6 29c3-3 8-3 11-1v3H6z" fill="#5fa8b4" />
    <rect x="17.500" y="16.500" width="14" height="8" rx="2" fill="#15171a" />
    <path d="M19 24.500h11l4 10H15.500z" fill="#b8bcc0" /><path d="M20 26h9l2 6H18z" fill="#e9ebec" />
    <rect x="21" y="27" width="7" height="4" rx="2" fill="#63686c" />
  </Art>
);
const DownloadsArt = () => (
  <svg width="38" height="34" viewBox="0 0 38 34">
    <defs>{grad("dl", "#4fcdf7", "#15b0ee")}</defs>
    <path d="M0 4a3 3 0 0 1 3-3h9l4 3h19a3 3 0 0 1 3 3v5H0z" fill="#1291c6" />
    <path d="M0 8h38v22a3 3 0 0 1-3 3H3a3 3 0 0 1-3-3z" fill="url(#dl)" />
    <circle cx="19" cy="19" r="7.300" fill="#1293cf" />
    <path d="M19 15v7.500M16 20l3 3 3-3" stroke="#46d0fb" strokeWidth="1.300" fill="none" />
  </svg>
);
const TrashArt = () => (
  <svg width="30" height="34" viewBox="0 0 30 34">
    <defs><linearGradient id="tr"><stop offset="0" stopColor="#77797b" /><stop offset=".5" stopColor="#a5a7a9" /><stop offset="1" stopColor="#6d6f71" /></linearGradient></defs>
    <path d="m2 0 4-2 4 1 4-2 5 2 5-1 5 3-1 5H3z" fill="#e9e9e9" />
    <path d="m6 1 3 2M13-1l2 4M20 1l4 2" stroke="#333" strokeWidth="1.500" /><path d="m10 2 3 1" stroke="#1aa0e0" strokeWidth="2" /><path d="m22 0 3 1" stroke="#d96a20" strokeWidth="1.500" />
    <path d="M1 3.500c6 2.500 22 2.500 28 0l-3.500 28c-.5 4.500-20.500 4.500-21 0z" fill="url(#tr)" opacity=".93" />
    <path d="M1 3.500c6 2.500 22 2.500 28 0" fill="none" stroke="#d4d6d7" />
    <path d="m5 8 4 20M12 9l1 21M20 9l-2 21M26 8l-4 20M4 14l22 10M26 12 6 25" stroke="#8e9193" strokeWidth=".6" />
  </svg>
);

const menus = [
  ["MySQLWorkbench", 118, 0.2, true], ["File", 21], ["Edit", 23], ["View", 29], ["Arrange", 48],
  ["Model", 37], ["Database", 57], ["Tools", 32], ["Scripting", 54], ["Help", 28],
];
const dojos = [["id INT", "key"], ["name VARCHAR(45)"], ["created_at DATETIME"], ["updated_at DATETIME"], ["ninja_id INT", "red"]];
const ninjas = [["id INT", "key"], ["first_name VARCHAR(45)"], ["last_name VARCHAR(45)"], ["age INT"], ["created_at DATETIME"], ["updated_at DATETIME"]];
const handles = [[87, 91], [168, 91], [249, 91], [87, 200], [249, 200], [87, 309], [168, 309], [249, 309]];
const palette = [["pointer", 22, true], ["hand", 22], ["eraser", 22], ["layer", 11], ["note", 10], ["image", 22], ["table", 11], ["view", 10], ["routines", 23]];

const EntityTable = ({ name, fields, foot, ...box }) => (
  <Entity {...box}>
    <EntityHead><TableGlyph />{name}<Tri /></EntityHead>
    <EntityBody>
      {fields.map(([label, mark]) => (
        <Field key={label}>
          <FieldMark>{mark === "key" ? <Key /> : <Diamond red={mark === "red"} />}</FieldMark>
          {label}
        </Field>
      ))}
    </EntityBody>
    <Indexes>Indexes<Tri right /></Indexes>
    <EntityFoot $h={foot} />
  </Entity>
);

export default function App() {
  return (
    <Desktop>
      <Global />
      <MenuBar>
        <AppleMark><FaApple size={17} color="#e8ebf2" /></AppleMark>
        {menus.map(([t, w, ls, bold]) => <MenuItem key={t} $w={w} $ls={ls} $bold={bold}>{t}</MenuItem>)}
        <StatusItems>
          <StatusIcon $w={15} $gap={20}>
            <svg width="15" height="14" viewBox="0 0 15 14">
              <rect width="15" height="14" fill="#eef0f5" />
              <path d="M8.500 1.500h5v5h-5zM1.500 8h5.500v4.500H1.500z" fill="#071a48" />
              <path d="M4 2v4M2 4h4M11 8.500v4M9 10.500h4" stroke="#071a48" strokeWidth="1.200" />
            </svg>
          </StatusIcon>
          <StatusIcon $w={13} $gap={15}>
            <svg width="13" height="13" viewBox="0 0 13 13"><circle cx="6.500" cy="6.500" r="5.800" fill="none" stroke="#eef0f5" strokeWidth="1.200" /><path d="M4.800 3.800v5.400l4.500-2.700z" fill="#eef0f5" /></svg>
          </StatusIcon>
          <StatusIcon $w={24} $gap={11} $pl={4}><FaBluetoothB size={14} /></StatusIcon>
          <StatusIcon $w={25} $gap={19}>
            <svg width="25" height="12" viewBox="0 0 25 12">
              <rect x=".5" y=".5" width="21.500" height="11" rx="3" fill="none" stroke="#a6aec4" />
              <rect x="2.200" y="2.200" width="18" height="7.600" rx="1.500" fill="#eef0f5" />
              <path d="M14 0 7.500 6.800h4L9.500 12l6.500-7h-4z" fill="#eef0f5" stroke="#061643" strokeWidth="1" />
              <path d="M23.500 4v4" stroke="#a6aec4" strokeWidth="1.300" />
            </svg>
          </StatusIcon>
          <StatusIcon $w={16} $gap={19}>
            <svg width="16" height="12" viewBox="0 0 16 12" fill="none" stroke="#eef0f5" strokeWidth="2">
              <path d="M.8 4.300c4-4.200 10.400-4.200 14.400 0M3.600 7.200c2.500-2.500 6.300-2.500 8.800 0" />
              <path d="M5.500 9c1.500-1.200 3.500-1.200 5 0L8 11.800z" fill="#eef0f5" stroke="none" />
            </svg>
          </StatusIcon>
          <StatusIcon $w={12} $gap={19}><Magnifier /></StatusIcon>
          <StatusIcon $w={14} $gap={17}>
            <svg width="14" height="13" viewBox="0 0 14 13">
              <rect x=".6" y=".6" width="12.800" height="4.800" rx="2.400" fill="none" stroke="#eef0f5" strokeWidth="1.200" /><circle cx="10.500" cy="3" r="2" fill="#eef0f5" />
              <rect y="7" width="14" height="6" rx="3" fill="#eef0f5" /><circle cx="3.300" cy="10" r="1.700" fill="#061643" />
            </svg>
          </StatusIcon>
          <StatusIcon $w={14} $gap={16}>
            <svg width="14" height="14" viewBox="0 0 14 14"><circle cx="7" cy="7" r="6.700" fill="#2b2360" /><path d="M1 5C3-1 11-1 13 5L7 8z" fill="#e72a86" /><path d="M1 8c2 5 4 5 5 5l1-6zM8 7l3 5 2-4z" fill="#2fc3dd" /><path d="m2 8 5-3 5 4-4-1v4L6 8z" fill="#f4fbff" /></svg>
          </StatusIcon>
          <Clock>{"Wed Sep 7  7:14 PM"}</Clock>
        </StatusItems>
      </MenuBar>

      <Window>
        <TitleBar>
          <Light $c="#ff4b48" /><Light $c="#ffb602" /><Light $c="#02d13f" />
          <WindowTitle><DocIcon />dojos_and_ninjas.mwb - MySQL Workbench</WindowTitle>
        </TitleBar>
        <DocTabs>
          <DocTab $w={85} $pl={33}>
            <svg width="16" height="14" viewBox="0 0 16 14">
              <path d="M2.500 8 8 3l5.500 5v6h-4v-4h-3v4h-4z" fill="#f2f2f2" /><path d="M.8 7.500 8 1l7.200 6.500" fill="none" stroke="#f2f2f2" strokeWidth="1.500" /><path d="M11.500.8h2v4h-2z" fill="#f2f2f2" />
            </svg>
          </DocTab>
          <DocTab $w={116} $pl={15} $ls={0}>MySQL Model</DocTab>
          <DocTab $w={135} $pl={16} $on>dojos_and_ninjas</DocTab>
        </DocTabs>
        <Toolbar>
          <ToolIcon $gap={6}><NewDoc /></ToolIcon>
          <ToolIcon $gap={6}><OpenDoc /></ToolIcon>
          <ToolIcon $gap={21}><SaveDoc /></ToolIcon>
          <ToolIcon $gap={6}><Undo /></ToolIcon>
          <ToolIcon $gap={19}><Undo flip /></ToolIcon>
          <ToolIcon $gap={4}><Hash slash /></ToolIcon>
          <ToolIcon $gap={13}><Hash /></ToolIcon>
          <ToolIcon $gap={0}><NewNote /></ToolIcon>
          <Search><Magnifier size={13} w={1.200} />Search</Search>
          <PaneToggle $side="left" /><PaneToggle $side="right" />
        </Toolbar>

        <Content>
          <Sidebar>
            <PanelHeader $h={24}>Navigator</PanelHeader>
            <Overview>
              <svg width="210" height="104" viewBox="0 0 210 104">
                <rect x="35.500" y="2.500" width="140" height="99" fill="#161616" stroke="#b4b4b4" />
                <path d="M105.500 3v98" stroke="#8c8c8c" />
                <rect x="35.500" y="3.500" width="68" height="49.500" fill="none" stroke="#c4c4c4" />
                <rect x="41" y="10" width="12" height="16" fill="#90bfdf" /><rect x="66" y="11" width="11" height="14" fill="#90bfdf" />
              </svg>
            </Overview>
            <ZoomRow>
              <Lens /><Slider /><Lens plus /><ZoomValue>100</ZoomValue><Steps />
            </ZoomRow>
            <Grip $h={9} />
            <Tabs><Tab $on>Catalog</Tab><Tab>Layers</Tab><Tab>User Types</Tab></Tabs>
            <Tree>
              <TreeRow $pl={5} $on $ls={0.12}>
                <TreeIcon $w={14}><Chevron open /></TreeIcon><TreeIcon $w={19}><Database /></TreeIcon>dojos_and_ninjas_schema
              </TreeRow>
              <TreeRow $pl={18}>
                <TreeIcon $w={12}><Chevron /></TreeIcon><TreeIcon $w={21}><Stack kind="tables" /></TreeIcon>Tables
              </TreeRow>
              <TreeRow $pl={30}><TreeIcon $w={21}><Stack kind="views" /></TreeIcon>Views</TreeRow>
              <TreeRow $pl={30}><TreeIcon $w={21}><Stack kind="routines" /></TreeIcon>Routine Groups</TreeRow>
            </Tree>
            <HScroll />
            <Grip $h={9} />
            <Tabs><Tab $on>Description</Tab><Tab>Properties</Tab><Tab>History</Tab></Tabs>
            <ObjectRow>
              <Popup>dojos: Table<PopupButton><Steps c="#fff" /></PopupButton></Popup>
            </ObjectRow>
            <DescriptionArea />
          </Sidebar>

          <Palette>
            {palette.map(([k, mb, on]) => <Tool key={k} $mb={mb} $on={on}>{PaletteIcons[k]}</Tool>)}
            <Relation><RelLine dashed />1:1</Relation>
            <Relation><RelLine dashed many />1:n</Relation>
            <Relation><RelLine />1:1</Relation>
            <Relation><RelLine many />1:n</Relation>
            <Relation $mb={22}><RelLine many both />n:m</Relation>
            <Relation><RelLine many pick />1:n</Relation>
          </Palette>

          <Center>
            <Canvas>
              <Link width="180" height="12" viewBox="0 0 180 12" fill="none" stroke="#000">
                <path d="M13.500 6.500h152" strokeDasharray="10.400 4" />
                <path d="M0 6.500h9M1 2.500l8 4-8 4" /><path d="M11.500 2v9M169.500 2v9M172.500 2v9" stroke="#555" /><path d="M167.500 6.500h10" />
              </Link>
              <EntityTable name="dojos" fields={dojos} $x={91} $y={95} $w={163} $h={220} foot={8} $selected />
              <EntityTable name="ninjas" fields={ninjas} $x={433} $y={106} $w={156} $h={197} foot={7} />
              {handles.map(([x, y]) => <Handle key={`${x}-${y}`} $x={x === 168 ? x : x - 1} $y={y} />)}
            </Canvas>
            <CanvasScroll />
          </Center>
          <VScroll />

          <Templates>
            <PanelHeader $h={26} $left>Templates</PanelHeader>
            <TemplateTools>
              <svg width="17" height="16" viewBox="0 0 17 16">
                <path d="M0 2h13v11H0z" fill="#b9d2f4" /><path d="M0 1h13v3H0z" fill="#3b86e8" /><path d="M3 4v9M6 4v9M9 4v9" stroke="#6c93cf" />
                <path d="m6 14 4-4" stroke="#f07a1c" strokeWidth="3" strokeLinecap="round" /><path d="m10 10 3-3M12.500 4.500v3h3" stroke="#dfe3e6" strokeWidth="1.800" fill="none" />
              </svg>
              <svg width="17" height="16" viewBox="0 0 17 16">
                <path d="M2 2h14v13.500H2z" fill="#bfd5f7" /><path d="M2 1h14.500v2H2z" fill="#3f1fd8" /><path d="M6 4v11M10 4v11M14 4v11M2 15h14" stroke="#7d9fdc" /><Spark />
              </svg>
            </TemplateTools>
            <Template><TemplateBadge /><TemplateText><TemplateName>timestamps</TemplateName>create_time, update_time</TemplateText></Template>
            <Template><TemplateBadge /><TemplateText $pt={2}><TemplateName>user</TemplateName>username, email, password, cre...</TemplateText></Template>
            <Template $last><TemplateBadge /><TemplateText><TemplateName>category</TemplateName>category_id, name</TemplateText></Template>
          </Templates>
        </Content>
        <StatusBar>/Users/firassweisgmail.com/Documents/dojos_and_ninjas.mwb saved.</StatusBar>
      </Window>

      <Dock>
        {dockApps.map((a, i) => <DockSlot key={i}>{a.art}{a.run && <RunDot />}</DockSlot>)}
        <DockRule $l={10} $r={8} />
        <DockSlot><PreviewArt /><RunDot /></DockSlot>
        <DockRule $l={10.5} $r={9} />
        <DockSlot><DownloadsArt /></DockSlot>
        <DockSlot><TrashArt /></DockSlot>
      </Dock>
    </Desktop>
  );
}
